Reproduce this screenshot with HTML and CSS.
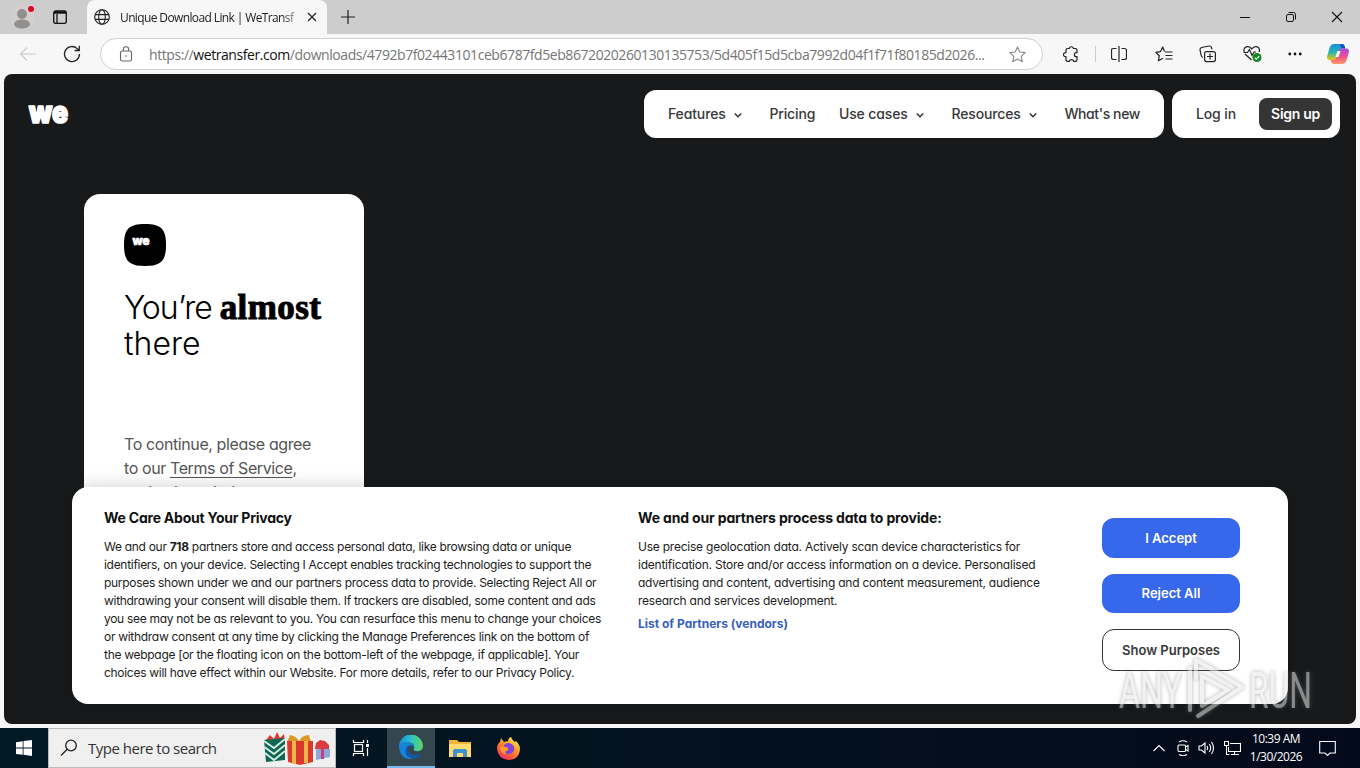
FILE: index.html
```
<!DOCTYPE html>
<html lang="en">
<head>
    <meta charset="utf-8">
    <link rel="stylesheet" href="styles.css">

    <title>Unique Download Link | WeTransfer</title>
</head>
<body>
    <div class="tabs">
        <svg class="profile" width="24" height="24" viewBox="0 0 24 24"><circle cx="12" cy="12" r="12" fill="#d3cfcc"/><circle cx="12" cy="9" r="5" fill="#92908e"/><ellipse cx="12" cy="19" rx="8" ry="4.5" fill="#92908e"/><circle cx="21" cy="4" r="4.5" fill="#e7c9cc"/><circle cx="21" cy="4" r="3" fill="#d00d25"/></svg>
        <svg class="tab-menu" width="16" height="16" viewBox="0 0 16 16" fill="none" stroke="#111" stroke-width="1.3"><rect x="1.7" y="2" width="12.6" height="12.3" rx="2"/><path d="M2 3.500h12" stroke-width="2.400"/><path d="M5 5v9"/></svg>
        <div class="tab">
            <svg width="16" height="16" viewBox="0 0 16 16" fill="none" stroke="#222" stroke-width="1.1"><circle cx="8" cy="8" r="7.3"/><ellipse cx="8" cy="8" rx="3.3" ry="7.3"/><path d="M1 5.6h14M1 10.4h14"/></svg>
            <span class="tab-title">Unique Download Link | WeTransf</span>
            <svg width="10" height="10" viewBox="0 0 10 10" fill="none" stroke="#222" stroke-width="1.2"><path d="M1 1l8 8M9 1l-8 8"/></svg>
        </div>
        <svg class="new-tab" width="14" height="14" viewBox="0 0 14 14" stroke="#222" stroke-width="1.2"><path d="M7 0v14M0 7h14"/></svg>
        <div class="window-buttons">
            <svg width="12" height="12" viewBox="0 0 12 12" stroke="#111"><path d="M1 6.5h10"/></svg>
            <svg width="12" height="12" viewBox="0 0 12 12" fill="none" stroke="#111"><rect x="1.5" y="3.5" width="7" height="7" rx="1.5"/><path d="M3.5 1.5h5a2 2 0 0 1 2 2v5"/></svg>
            <svg width="12" height="12" viewBox="0 0 12 12" stroke="#111" stroke-width="1.1"><path d="M1 1l10 10M11 1l-10 10"/></svg>
        </div>
    </div>

    <div class="toolbar">
        <svg class="back" width="18" height="18" viewBox="0 0 18 18" fill="none" stroke="#ccc" stroke-width="1.2"><path d="M17 9H2M8 2.5L1.500 9l6.500 6.500"/></svg>
        <svg class="reload" width="18" height="18" viewBox="0 0 18 18" fill="none" stroke="#222" stroke-width="1.3"><path d="M16.500 9a7.500 7.500 0 1 1-2.300-5.400l1.800 1.700M16.300 .8v4.700h-4.700"/></svg>
        <div class="address">
            <svg class="lock" width="14" height="16" viewBox="0 0 14 16" fill="none" stroke="#666" stroke-width="1.1"><rect x="1.500" y="5" width="11" height="10" rx="1.800"/><path d="M4.300 5V3.500a2.700 2.700 0 0 1 5.400 0V5"/><circle cx="7" cy="10" r=".8" fill="#666" stroke="none"/></svg>
            <span class="url">https://<b>wetransfer.com</b>/downloads/4792b7f02443101ceb6787fd5eb8672020260130135753/5d405f15d5cba7992d04f1f71f80185d2026...</span>
            <svg class="star" width="17" height="17" viewBox="0 0 17 17" fill="none" stroke="#888" stroke-width="1.1" stroke-linejoin="round"><path d="M8.500 1l2.300 5 5.400.6-4 3.700 1.100 5.400-4.800-2.700-4.800 2.700 1.100-5.400-4-3.700L6.200 6z"/></svg>
        </div>
        <div class="tools">
            <svg class="puzzle" width="17" height="17" viewBox="0 0 17 17" fill="none" stroke="#222" stroke-width="1.2" stroke-linejoin="round"><path d="M3 4.200q0-1.700 1.700-1.700h1.500a2.200 2.200 0 0 1 4.300 0h1.800q1.700 0 1.700 1.700v2.500h-.6a2 2 0 0 0 0 4h.6v3q0 1.700-1.700 1.700h-1.600a2.200 2.200 0 0 0-4.300 0H4.700Q3 15.400 3 13.700v-3H2.500a2 2 0 0 1 0-4H3z"/></svg>
            <span class="divider"></span>
            <svg class="split" width="16" height="16" viewBox="0 0 16 16" fill="none" stroke="#222" stroke-width="1.2"><path d="M5.500 2.500H2.500q-2 0-2 2v7q0 2 2 2h3M10.500 2.500h3q2 0 2 2v7q0 2-2 2h-3M8 0v16"/></svg>
            <svg class="favorites" width="18" height="17" viewBox="0 0 18 17" fill="none" stroke="#222" stroke-width="1.200" stroke-linejoin="round"><path d="M9.500 5.500L7.700 1 5.500 5.600.8 6.300l3.500 3.400-.9 5L8 12.300M10 6h7.500M10.500 9.500h7M10.500 13h7"/></svg>
            <svg class="collections" width="18" height="18" viewBox="0 0 18 18" fill="none" stroke="#222" stroke-width="1.200"><rect x="5.600" y="6.600" width="10.800" height="10" rx="2"/><path d="M11 8.500v6M8 11.500h6M4 12.500Q2.500 12 2.200 10.500L1 5Q.8 3 2.600 2.500L10 1q2-.2 2.500 1.500l.5 1.800"/></svg>
            <svg class="health" width="19" height="18" viewBox="0 0 19 18" fill="none" stroke="#222" stroke-width="1.200"><path d="M8.500 15L2 9M1.300 7C-.5 2 5.500-.5 8.800 3.800 12-.5 18 2 16 7M.5 7.500h4l2-3 2.500 6 2-3.500h2"/><circle cx="14" cy="12.500" r="4.500" fill="#13871c" stroke="none"/><path d="M11.800 12.700l1.500 1.400 3-3" stroke="#fff"/></svg>
            <svg class="more" width="14" height="4" viewBox="0 0 14 4" fill="#111"><circle cx="1.800" cy="2" r="1.400"/><circle cx="7" cy="2" r="1.400"/><circle cx="12.200" cy="2" r="1.400"/></svg>
            <svg class="copilot" width="24" height="22" viewBox="0 0 24 22">
                <defs>
                    <linearGradient id="cp1" x1="0" y1="0" x2="0" y2="1"><stop offset="0" stop-color="#188fdf"/><stop offset=".5" stop-color="#24b5b2"/><stop offset="1" stop-color="#f0c70a"/></linearGradient>
                    <linearGradient id="cp2" x1="0" y1="0" x2="0" y2="1"><stop offset="0" stop-color="#a64be8"/><stop offset=".5" stop-color="#ed4e91"/><stop offset="1" stop-color="#ff9862"/></linearGradient>
                </defs>
                <path d="M8 1h8q2 0 2.600 2l.7 2.500h-3q-2 0-2.700 2l-2 7q-.8 2.500-3 2.500H4Q0 17 1.300 12.500L3.500 5Q4.700 1 8 1z" fill="url(#cp1)"/>
                <path d="M14 1h2q2 0 2.600 2l.7 2.500h-4z" fill="#1750bf"/>
                <path d="M16 21H8q-2 0-2.700-2l-.6-2.200h3q2 0 2.700-2l2-7Q13.200 5.500 15.500 5.500H20q4 0 2.700 4.500l-2.200 7Q19.300 21 16 21z" fill="url(#cp2)"/>
                <path d="M11.500 8h3l-2 6h-3z" fill="#f7f7f7"/>
            </svg>
        </div>
    </div>

    <main class="page">
        <header class="header">
            <svg class="logo" width="44" height="40" viewBox="0 0 44 40"><text x="1" y="29" textLength="39" lengthAdjust="spacingAndGlyphs">we</text></svg>
            <nav class="nav">
                <a class="nav-link">Features <svg width="16" height="16" viewBox="0 0 16 16"><path d="M4.800 6.500L8 9.700l3.200-3.200"/></svg></a>
                <a class="nav-link">Pricing</a>
                <a class="nav-link">Use cases <svg width="16" height="16" viewBox="0 0 16 16"><path d="M4.800 6.500L8 9.700l3.200-3.200"/></svg></a>
                <a class="nav-link">Resources <svg width="16" height="16" viewBox="0 0 16 16"><path d="M4.800 6.500L8 9.700l3.200-3.200"/></svg></a>
                <a class="nav-link nav-news">What's new</a>
            </nav>
            <div class="account">
                <a class="nav-link">Log in</a>
                <a class="signup">Sign up</a>
            </div>
        </header>

        <section class="card">
            <svg class="card-icon" width="42" height="42" viewBox="0 0 42 42"><path d="M21 0C37 0 42 5 42 21S37 42 21 42 0 37 0 21 5 0 21 0z"/><text x="8.500" y="21" textLength="17" lengthAdjust="spacingAndGlyphs">we</text></svg>
            <h1 class="card-title"><span>You’re</span> <em>almost</em><br>there</h1>
            <p class="card-text">To continue, please agree<br>to our <u>Terms of Service</u>,<br>and acknowledge our</p>
        </section>

        <section class="consent">
            <div class="consent-about">
                <h2>We Care About Your Privacy</h2>
                <p>We and our <b>718</b> partners store and access personal data, like browsing data or unique<br>
                identifiers, on your device. Selecting I Accept enables tracking technologies to support the<br>
                purposes shown under we and our partners process data to provide. Selecting Reject All or<br>
                withdrawing your consent will disable them. If trackers are disabled, some content and ads<br>
                you see may not be as relevant to you. You can resurface this menu to change your choices<br>
                or withdraw consent at any time by clicking the Manage Preferences link on the bottom of<br>
                the webpage [or the floating icon on the bottom-left of the webpage, if applicable]. Your<br>
                choices will have effect within our Website. For more details, refer to our Privacy Policy.</p>
            </div>
            <div class="consent-data">
                <h2>We and our partners process data to provide:</h2>
                <p>Use precise geolocation data. Actively scan device characteristics for<br>
                identification. Store and/or access information on a device. Personalised<br>
                advertising and content, advertising and content measurement, audience<br>
                research and services development.</p>
                <a class="vendors">List of Partners (vendors)</a>
            </div>
            <div class="consent-buttons">
                <button class="btn">I Accept</button>
                <button class="btn btn-reject">Reject All</button>
                <button class="btn btn-outline">Show Purposes</button>
            </div>
        </section>
    </main>

    <svg class="watermark" width="210" height="76" viewBox="0 0 210 76">
        <text x="3" y="52" textLength="63" lengthAdjust="spacingAndGlyphs">ANY</text>
        <text x="133" y="52" textLength="63" lengthAdjust="spacingAndGlyphs">RUN</text>
        <path d="M74 54V12M80 22V4l46 27-44 29M86 20l26 14-26 16z"/>
    </svg>

    <footer class="taskbar">
        <svg class="start" width="16" height="16" viewBox="0 0 16 16" fill="#fff"><path d="M0 2.200l6.700-1v6.400H0zM7.500 1.100L16 0v7.600H7.500zM0 8.400h6.700v6.400L0 13.900zM7.500 8.400H16V16l-8.500-1.200z"/></svg>
        <div class="search">
            <svg width="18" height="18" viewBox="0 0 18 18" fill="none" stroke="#222" stroke-width="1.300"><circle cx="11" cy="6.500" r="5.300"/><path d="M7.200 10.300L1 16.500"/></svg>
            <span>Type here to search</span>
            <svg class="gifts" width="68" height="34" viewBox="0 0 68 34">
                <path d="M3 9l4-5 4 4 3-7 3 6 4-4 1 7z" fill="#dc3b31"/>
                <path d="M1 9l21-2v22L3 31z" fill="#0d6656"/>
                <path d="M1 10l10 7 11-9M1.500 16l9.500 7 11-9M2 22l9 7 11-9" fill="none" stroke="#d9f0df" stroke-width="1.800"/>
                <path d="M27 4q6 1 9 6 3-6 10-6l2 7H24z" fill="#d99a2b"/>
                <path d="M24 10h26v21l-13 3-12-3z" fill="#d8392c"/>
                <path d="M29 10h4v23h-4zM41 10h4v22h-4z" fill="#edb446"/>
                <path d="M52 17l1-5 4-3 5 1 4 4v4H52z" fill="#d83e41"/>
                <path d="M53 18h14v8l-14 3z" fill="#8ea8df"/><path d="M58 18h3v10h-3z" fill="#c7407d"/>
            </svg>
        </div>
        <div class="task task-view">
            <svg width="18" height="18" viewBox="0 0 18 18" fill="none" stroke="#fff" stroke-width="1.200"><path d="M1.500 1v2.500h10V1M1.500 17v-2.500h10V17M15.500 1v3M15.500 9v8"/><rect x="2.500" y="5.500" width="8" height="7"/><path d="M14 6.500h3" stroke-width="3"/></svg>
        </div>
        <div class="task task-active">
            <svg width="24" height="24" viewBox="0 0 24 24">
                <defs>
                    <linearGradient id="eg1" x1="0" y1="0" x2="1" y2="0"><stop offset="0" stop-color="#1689df"/><stop offset=".5" stop-color="#2cc2c9"/><stop offset="1" stop-color="#61d65d"/></linearGradient>
                </defs>
                <path d="M0 12A12 12 0 0 1 24 11q0 5-5.500 5.300-5 0-3.500-3.300 1-5-5-5.500Q3 7 0 12z" fill="url(#eg1)"/>
                <path d="M0 12Q2 7 8 7.300 14 7.500 15 12q-1-1.500-3-1.500-5 0-5 5.500 1 6 7 8Q1 25 0 12z" fill="#1685d9"/>
                <path d="M12 10q-4 3-2 7 3 5 12.500 1.500Q18 26 11 23 5 20 7 14q1-3.500 5-4z" fill="#1057a4"/>
            </svg>
        </div>
        <div class="task">
            <svg width="22" height="19" viewBox="0 0 22 19"><path d="M0 1h8l2 2h12v15H0z" fill="#f0b43b"/><path d="M0 5h22v13H0z" fill="#ffda70"/><path d="M4 18V12q0-2 2-2h10q2 0 2 2v6h-4v-4H8v4z" fill="#3e91cf"/></svg>
        </div>
        <div class="task">
            <svg width="23" height="23" viewBox="0 0 23 23">
                <defs>
                    <linearGradient id="ff1" x1=".8" y1="0" x2=".2" y2="1"><stop offset="0" stop-color="#fff04b"/><stop offset=".5" stop-color="#ff8528"/><stop offset="1" stop-color="#e82466"/></linearGradient>
                </defs>
                <path d="M4 1l3 4q2-1 4-.5Q11 1 14 0q1 3 4 5l1-1q4 4 4 8Q22 23 11.500 23 1 22 0 12 0 7 3 5z" fill="url(#ff1)"/>
                <path d="M7 8q4-4 9 0 3 5-1 8-6 3-9-2l5-1-1-3-4 1z" fill="#8443d5"/>
                <path d="M5 9l6 2q1 2-2 3-2 2 1 3-5 1-7-5z" fill="#ff9c2a"/>
            </svg>
        </div>
        <div class="tray">
            <svg width="12" height="8" viewBox="0 0 12 8"><path d="M.5 7L6 1.500 11.500 7"/></svg>
            <svg width="12" height="16" viewBox="0 0 12 16"><rect x="1" y="5" width="7.500" height="6.500" rx="1"/><path d="M8.500 7l2.500-1.500v5.500L8.500 9.500M2 2Q6-.5 10 2M2 14.500q4 2.500 8 0"/></svg>
            <svg width="17" height="14" viewBox="0 0 17 14"><path d="M1 5h2.500L7 2v10L3.500 9H1zM9 5q1.300 2 0 4M11.300 3q2.700 4 0 8M13.500 1q4 6 0 12"/></svg>
            <svg width="17" height="15" viewBox="0 0 17 15"><path d="M6 2.500h10.500v8H4.500V6M7 13.500h8M10.500 10.500v3M.5 .5h4v4h-4zM2.500 4.500v9h3"/></svg>
            <div class="clock">10:39 AM<br>1/30/2026</div>
            <svg width="17" height="17" viewBox="0 0 17 17"><path d="M.7 1.500h15.600v11.500H11L8.500 15.500 6 13H.7z"/></svg>
        </div>
    </footer>
</body>
</html>
```
FILE: styles.css
```
* {
    box-sizing: border-box;
}

body {
    margin: 0;
    width: 1360px;
    height: 768px;
    overflow: hidden;
    display: flex;
    flex-direction: column;
    position: relative;
    background-color: #f7f7f7;
    font-family: "Open Sans", "Noto Sans", sans-serif;
}

svg {
    display: block;
    flex: none;
}

/* browser tabs */
.tabs {
    height: 34px;
    flex: none;
    display: flex;
    align-items: center;
    background-color: #cdcdcd;
}

.profile {
    margin-left: 10px;
    overflow: visible;
}

.tab-menu {
    margin-left: 18px;
}

.tab {
    width: 240px;
    height: 34px;
    margin-left: 19px;
    padding: 0 10px 0 7px;
    display: flex;
    align-items: center;
    background-color: #f7f7f7;
    border-radius: 8px 8px 0 0;
}

.tab-title {
    width: 179px;
    margin: 0 8px 0 10px;
    white-space: nowrap;
    font-size: 12px;
    letter-spacing: -0.62px;
    color: #222;
    -webkit-mask-image: linear-gradient(to right, #000 90%, rgba(0, 0, 0, 0.3));
}

.new-tab {
    margin-left: 14px;
}

.window-buttons {
    display: flex;
    gap: 34px;
    margin-left: auto;
    padding-right: 17px;
}

/* browser toolbar */
.toolbar {
    height: 40px;
    flex: none;
    display: flex;
    align-items: center;
}

.back {
    margin-left: 19px;
}

.reload {
    margin-left: 26px;
}

.address {
    width: 943px;
    height: 32px;
    margin-left: 19px;
    padding: 0 16px 0 18px;
    display: flex;
    align-items: center;
    background-color: #fff;
    border: 1px solid #d0d0d0;
    border-radius: 16px;
}

.url {
    flex: 1;
    margin-left: 16px;
    white-space: nowrap;
    font-size: 14px;
    letter-spacing: -0.43px;
    color: #767676;
}

.url b {
    font-weight: 400;
    color: #111;
}

.tools {
    flex: 1;
    display: flex;
    align-items: center;
}

.puzzle { margin-left: 20px; }

.divider {
    width: 1px;
    height: 16px;
    margin-left: 15px;
    background-color: #ccc;
}

.split { margin-left: 15px; }
.favorites { margin-left: 28px; }
.collections { margin-left: 26px; }
.health { margin-left: 26px; }
.more { margin-left: 26px; }
.copilot { margin-left: 24px; }

/* page */
.page {
    height: 650px;
    flex: none;
    margin: 0 4px 4px;
    position: relative;
    overflow: hidden;
    background-color: #17191b;
    border-radius: 8px;
    font-family: Inter, "Liberation Sans", sans-serif;
    font-feature-settings: "cv11";
}

.header {
    display: flex;
    align-items: center;
    gap: 8px;
    padding: 16px 16px 0 24px;
}

.logo {
    margin-right: auto;
}

.logo text,
.card-icon text {
    font-family: Inter, sans-serif;
    font-weight: 900;
    font-size: 30px;
    fill: #fff;
    stroke: #fff;
    stroke-width: 1.7px;
    stroke-linejoin: round;
}

.card-icon text {
    font-size: 12px;
    stroke-width: 0.7px;
}

.nav,
.account {
    height: 48px;
    display: flex;
    align-items: center;
    background-color: #fff;
    border-radius: 12px;
}

.nav {
    width: 520px;
    justify-content: space-between;
    padding: 0 24px;
}

.account {
    width: 168px;
    justify-content: space-between;
    padding: 0 8px 0 24px;
}

.nav-link {
    display: flex;
    align-items: center;
    gap: 4px;
    padding-bottom: 1px;
    white-space: nowrap;
    font-size: 14px;
    font-weight: 500;
    letter-spacing: -0.13px;
    color: #383838;
}

.nav-news {
    letter-spacing: -0.4px;
}

.nav-link svg {
    fill: none;
    stroke: #383838;
    stroke-width: 1.6;
    margin-top: 2px;
}

.signup {
    width: 73px;
    height: 32px;
    line-height: 32px;
    text-align: center;
    white-space: nowrap;
    background-color: #353535;
    border-radius: 8px;
    color: #fff;
    font-size: 14px;
    font-weight: 600;
    letter-spacing: -0.3px;
}

.card {
    width: 280px;
    height: 500px;
    margin: 56px 0 0 80px;
    padding: 30px 40px;
    background-color: #fff;
    border-radius: 16px;
}

.card-title {
    margin: 24px 0 0;
    font-size: 32px;
    line-height: 36px;
    font-weight: 350;
    white-space: nowrap;
    color: #000;
}

.card-title span {
    margin-right: -1px;
    letter-spacing: -1px;
}

.card-title em {
    font-family: "Liberation Serif", serif;
    font-style: normal;
    font-weight: 700;
    font-size: 35px;
    line-height: 30px;
    letter-spacing: 0.4px;
    -webkit-text-stroke: 1px #000;
}

.card-text {
    margin: 70px 0 0;
    font-size: 16px;
    line-height: 24px;
    letter-spacing: -0.4px;
    white-space: nowrap;
    color: #555;
}

.card-text u {
    text-underline-offset: 3px;
    text-decoration-thickness: 1px;
}

/* cookie consent, lies over the page */
.consent {
    position: absolute;
    left: 68px;
    bottom: 20px;
    width: 1216px;
    height: 217px;
    padding: 22px 48px 0 32px;
    display: flex;
    background-color: #fff;
    border-radius: 16px;
    box-shadow: 0 0 18px rgba(0, 0, 0, 0.2);
    color: #1c1c1c;
}

.consent h2 {
    margin: 0;
    font-size: 14px;
    line-height: 18px;
    font-weight: 700;
    letter-spacing: -0.23px;
    color: #111;
}

.consent .consent-data h2 {
    letter-spacing: -0.16px;
}

.consent p {
    margin: 11px 0 0;
    font-size: 12px;
    line-height: 18px;
    letter-spacing: -0.295px;
    white-space: nowrap;
}

.consent .consent-data p {
    letter-spacing: -0.23px;
}

.consent-about {
    width: 534px;
}

.consent-data {
    width: 464px;
}

.vendors {
    display: block;
    margin-top: 5px;
    font-size: 12px;
    line-height: 18px;
    font-weight: 700;
    color: #3860be;
}

.consent-buttons {
    width: 138px;
    padding-top: 9px;
    display: flex;
    flex-direction: column;
    gap: 16px;
}

.btn {
    height: 40px;
    padding: 0 0 1px;
    border: none;
    border-radius: 12px;
    background-color: #3767ea;
    color: #fff;
    font-family: inherit;
    font-size: 13px;
    font-weight: 600;
    font-feature-settings: inherit;
}

.btn-reject {
    height: 39px;
}

.btn-outline {
    height: 42px;
    background-color: #fff;
    border: 1px solid #333;
    color: #383838;
}

.watermark {
    position: absolute;
    left: 1116px;
    top: 656px;
    opacity: 0.55;
    filter: drop-shadow(0 0 2px #777);
}

.watermark text {
    font-family: Roboto, sans-serif;
    font-weight: 400;
    font-size: 50px;
    fill: #e8e8e8;
}

.watermark path {
    fill: none;
    stroke: #e8e8e8;
    stroke-width: 4;
    stroke-linejoin: round;
    stroke-linecap: round;
}

/* taskbar */
.taskbar {
    height: 40px;
    flex: none;
    display: flex;
    align-items: center;
    background: linear-gradient(to right, #021a24, #03131f 45%, #040a1b);
}

.start {
    margin: 0 16px;
}

.search {
    width: 288px;
    height: 40px;
    padding: 0 4px 0 11px;
    display: flex;
    align-items: center;
    background-color: #f0f0f0;
    border: 1px solid #bbb;
    font-size: 15px;
    letter-spacing: -0.5px;
    color: #333;
}

.search span {
    margin-left: 10px;
}

.gifts {
    margin-left: auto;
}

.task {
    width: 49px;
    height: 40px;
    display: flex;
    align-items: center;
    justify-content: center;
}

.task-view {
    margin-right: 2px;
}

.task-active {
    width: 48px;
    background-color: #34474f;
    border-bottom: 2px solid #76b9ed;
}

.tray {
    margin-left: auto;
    padding-right: 24px;
    display: flex;
    align-items: center;
    color: #fff;
}

.tray svg {
    fill: none;
    stroke: #fff;
    stroke-width: 1.1;
    margin-right: 9px;
}

.tray svg:first-child {
    margin-right: 12px;
}

.tray svg:nth-child(4) {
    margin-right: 7px;
}

.clock {
    width: 56px;
    margin-right: 15px;
    font-size: 12px;
    line-height: 18px;
    letter-spacing: -0.5px;
    text-align: center;
    white-space: nowrap;
}

.tray svg:last-child {
    margin-right: 0;
}
```
